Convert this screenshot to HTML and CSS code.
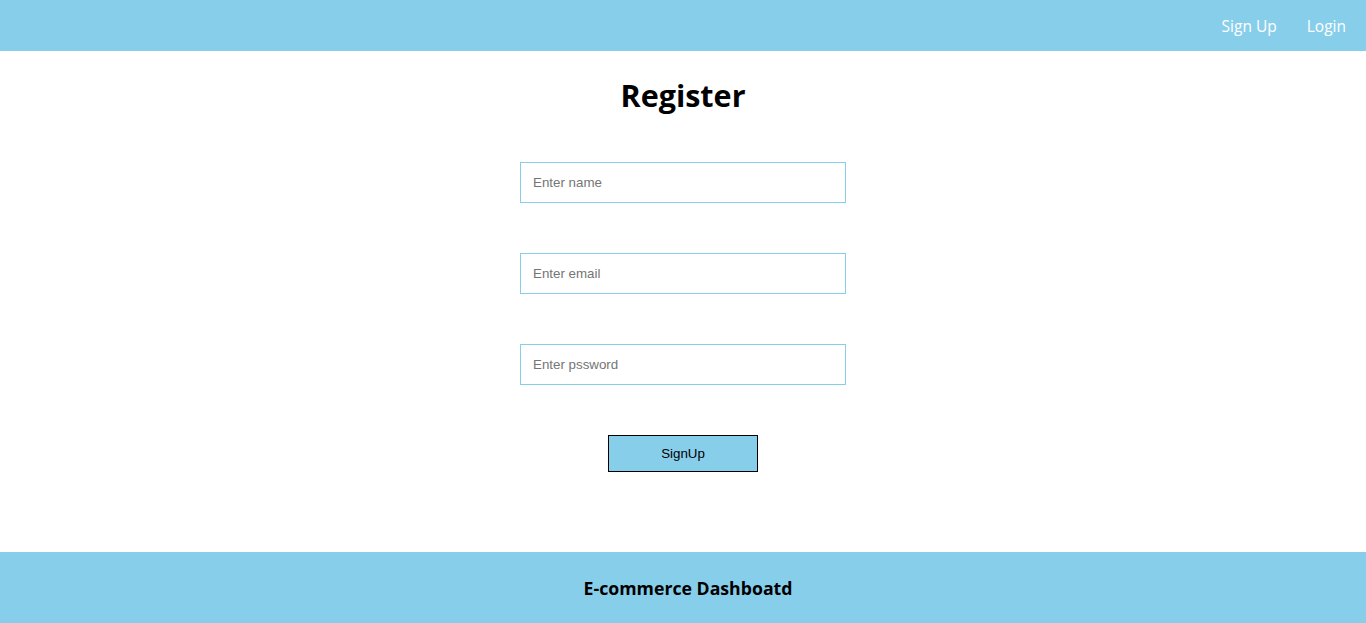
FILE: index.html
```html
<!DOCTYPE html>
<html lang="en">
<head>
<meta charset="utf-8">
<title>Register</title>
<link rel="stylesheet" href="styles.css">
</head>
<body>
<div class="page">
  <header class="nav">
    <a class="nav-link" href="#">Sign Up</a>
    <a class="nav-link" href="#">Login</a>
  </header>
  <main class="main">
    <h1 class="title">Register</h1>
    <div class="form">
      <input class="field" type="text" placeholder="Enter name">
      <input class="field" type="text" placeholder="Enter email">
      <input class="field" type="password" placeholder="Enter pssword">
      <button class="btn" type="button">SignUp</button>
    </div>
  </main>
  <footer class="footer">
    <h3 class="footer-title">E-commerce Dashboatd</h3>
  </footer>
</div>
</body>
</html>
```
FILE: styles.css
```css
* { box-sizing: border-box; }
html, body { margin: 0; padding: 0; }
body {
  font-family: "Open Sans", "Noto Sans", sans-serif;
  background: #fff;
}
.page {
  min-height: 100vh;
  display: flex;
  flex-direction: column;
}
.nav {
  height: 51px;
  background: #87ceeb;
  display: flex;
  justify-content: flex-end;
  align-items: center;
  gap: 30px;
  padding: 1px 20px 0 0;
}
.nav-link {
  color: #fff;
  text-decoration: none;
  font-size: 15.5px;
}
.main {
  flex: 1;
  display: flex;
  flex-direction: column;
  align-items: center;
}
.title {
  margin: 23px 0 0;
  font-size: 30.5px;
  font-weight: 700;
  line-height: 42px;
  color: #000;
}
.form {
  margin-top: 46px;
  display: flex;
  flex-direction: column;
  align-items: center;
}
.field {
  width: 326px;
  height: 41px;
  padding: 0 12px;
  border: 1px solid #87ceeb;
  font-family: "Liberation Sans", Arial, sans-serif;
  font-size: 13.33px;
  color: #000;
  outline: none;
  margin-bottom: 50px;
}
.field::placeholder { color: #757575; }
.btn {
  width: 150px;
  height: 37px;
  background: #87ceeb;
  border: 1px solid #000;
  font-family: "Liberation Sans", Arial, sans-serif;
  font-size: 13.33px;
  color: #000;
  padding: 0;
}
.footer {
  height: 71px;
  background: #87ceeb;
  display: flex;
  align-items: center;
  justify-content: center;
  padding-left: 10px;
}
.footer-title {
  margin: 0;
  font-size: 17.7px;
  font-weight: 700;
  color: #000;
}
```
